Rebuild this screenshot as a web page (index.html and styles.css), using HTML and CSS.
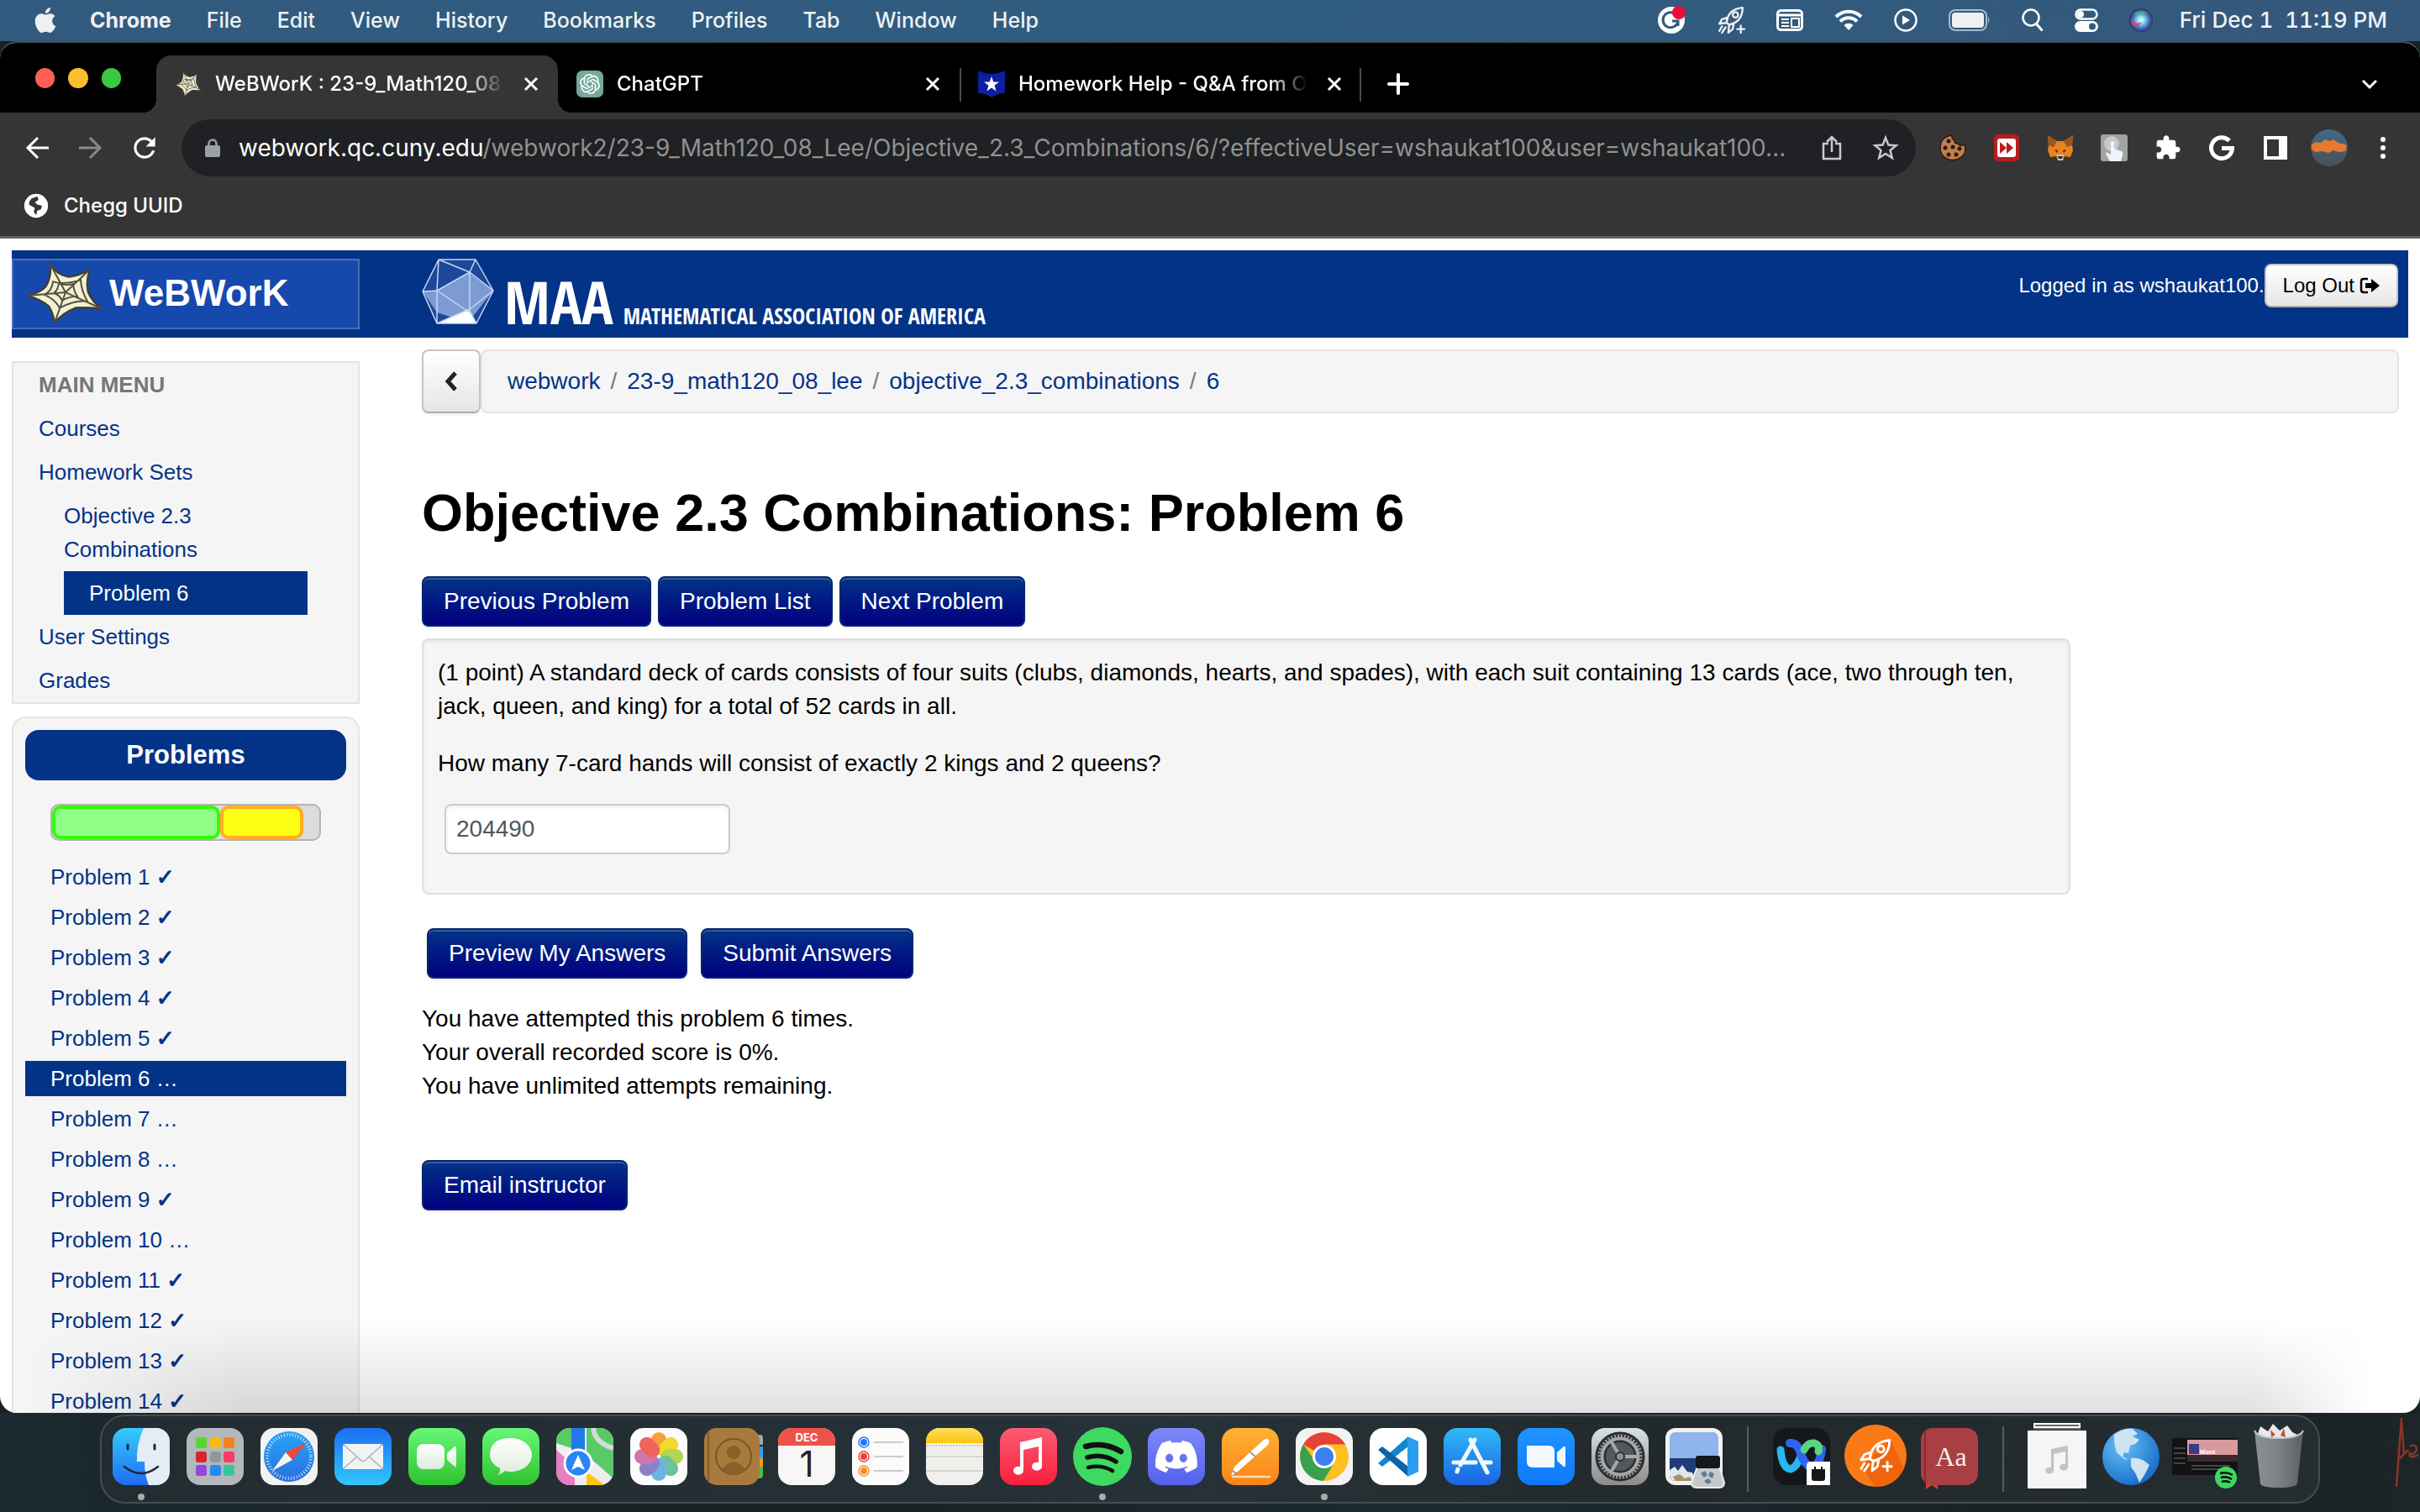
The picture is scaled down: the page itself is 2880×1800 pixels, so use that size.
FILE: index.html
```html
<!DOCTYPE html>
<html lang="en">
<head>
<meta charset="utf-8">
<title>WeBWorK : 23-9_Math120_08_Lee : Objective_2.3_Combinations : 6</title>
<link rel="stylesheet" href="styles.css">
</head>
<body>
<svg class="defs" aria-hidden="true">
  <defs>
    <linearGradient id="g-green" x1="0" y1="0" x2="0" y2="1"><stop offset="0" stop-color="#67f777"/><stop offset="1" stop-color="#2ec22f"/></linearGradient>
    <linearGradient id="g-white" x1="0" y1="0" x2="0" y2="1"><stop offset="0" stop-color="#fff"/><stop offset="1" stop-color="#dcebdc"/></linearGradient>
    <linearGradient id="g-mail" x1="0" y1="0" x2="0" y2="1"><stop offset="0" stop-color="#1d6ef2"/><stop offset="1" stop-color="#31c6fb"/></linearGradient>
    <linearGradient id="g-finder" x1="0" y1="0" x2="0" y2="1"><stop offset="0" stop-color="#36ccfb"/><stop offset="1" stop-color="#1f6cf2"/></linearGradient>
    <linearGradient id="g-music" x1="0" y1="0" x2="0" y2="1"><stop offset="0" stop-color="#fb5c74"/><stop offset="1" stop-color="#fa1f3c"/></linearGradient>
    <linearGradient id="g-note" x1="0" y1="0" x2="0" y2="1"><stop offset="0" stop-color="#fede5a"/><stop offset="1" stop-color="#fdc50f"/></linearGradient>
    <linearGradient id="g-discord" x1="0" y1="0" x2="0" y2="1"><stop offset="0" stop-color="#7d87f8"/><stop offset="1" stop-color="#5560ef"/></linearGradient>
    <linearGradient id="g-orange" x1="0" y1="0" x2="0" y2="1"><stop offset="0" stop-color="#feb233"/><stop offset="1" stop-color="#fa8419"/></linearGradient>
    <linearGradient id="g-store" x1="0" y1="0" x2="0" y2="1"><stop offset="0" stop-color="#2fbaf8"/><stop offset="1" stop-color="#1a62e2"/></linearGradient>
    <linearGradient id="g-zoom" x1="0" y1="0" x2="0" y2="1"><stop offset="0" stop-color="#1f94ff"/><stop offset="1" stop-color="#0f78fb"/></linearGradient>
    <linearGradient id="g-gear" x1="0" y1="0" x2="0" y2="1"><stop offset="0" stop-color="#d6e3ea"/><stop offset="1" stop-color="#8e8a86"/></linearGradient>
    <linearGradient id="g-safari" x1="0" y1="0" x2="0" y2="1"><stop offset="0" stop-color="#27a5f5"/><stop offset="1" stop-color="#2a6fe0"/></linearGradient>
    <linearGradient id="g-trash" x1="0" y1="0" x2="1" y2="0"><stop offset="0" stop-color="#8d9194"/><stop offset=".5" stop-color="#7d8184"/><stop offset="1" stop-color="#5c6063"/></linearGradient>
    <linearGradient id="g-avatar" x1="0" y1="0" x2="0" y2="1"><stop offset="0" stop-color="#3f6c84"/><stop offset="1" stop-color="#4b4f5c"/></linearGradient>
    <radialGradient id="g-earth" cx=".35" cy=".3" r=".8"><stop offset="0" stop-color="#66c1f8"/><stop offset="1" stop-color="#1266c4"/></radialGradient>
    <radialGradient id="g-siri"><stop offset="0" stop-color="#fff"/><stop offset=".35" stop-color="#7dd3e8"/><stop offset=".7" stop-color="#3c6fc4"/><stop offset="1" stop-color="#3a2c5e"/></radialGradient>
    <clipPath id="tile"><rect width="68" height="68" rx="16"/></clipPath>
    <symbol id="rocket" viewBox="0 0 32 32"><g fill="none" stroke="currentColor" stroke-width="2.2" stroke-linejoin="round" stroke-linecap="round"><path d="M11 19C12 9 18 3 29 2c0 11-6 17-15 19z"/><circle cx="21" cy="10" r="3"/><path d="M12 13l-6 2-3 5 8-1zM19 20l-1 6-5 4 1-9zM6 23l-3 5M10 24l-4 6"/><path d="M27 22v8M23 26h8"/></g></symbol>
    <symbol id="close" viewBox="0 0 24 24"><path d="M5 5l14 14M19 5L5 19" stroke="currentColor" stroke-width="3" fill="none"/></symbol>
    <symbol id="star" viewBox="0 0 90 76" preserveAspectRatio="none"><path d="M28 3q8 13 22 15 12-1 25-9-5 14-2 28 5 12 16 20-20-2-31-1-15 6-25 18-2-12-7-20-9-8-25-13 16-4 22-12 6-11 5-26z" fill="#f2f1d2" stroke="#3f3d33" stroke-width="2.500" stroke-linejoin="round"/><path d="M46 37L28 3M46 37L75 9M46 37l43 20M46 37L33 74M46 37L1 41M31 24q14 4 33-2 1 14 8 26-15-2-33 8-5-10-18-16 9-5 10-16zM38 26q8 3 17 1 1 9 5 15-10 0-18 5-3-7-10-9 5-4 6-12z" fill="none" stroke="#55513f" stroke-width="2"/></symbol>
  </defs>
</svg>

<header class="menubar">
  <nav class="menus" aria-label="Menu bar">
    <svg class="apple" viewBox="0 0 24 24"><path fill="currentColor" d="M12.152 6.896c-.948 0-2.415-1.078-3.96-1.04-2.04.027-3.91 1.183-4.961 3.014-2.117 3.675-.546 9.103 1.519 12.09 1.013 1.454 2.208 3.09 3.792 3.039 1.52-.065 2.09-.987 3.935-.987 1.831 0 2.35.987 3.96.948 1.637-.026 2.676-1.48 3.676-2.948 1.156-1.688 1.636-3.325 1.662-3.415-.039-.013-3.182-1.221-3.22-4.857-.026-3.04 2.48-4.494 2.597-4.559-1.429-2.09-3.623-2.324-4.39-2.376-2-.156-3.675 1.09-4.61 1.09zM15.53 3.83c.843-1.012 1.4-2.427 1.245-3.83-1.207.052-2.662.805-3.532 1.818-.78.896-1.454 2.338-1.273 3.714 1.338.104 2.715-.688 3.559-1.701"/></svg>
    <span class="app-name">Chrome</span><span>File</span><span>Edit</span><span>View</span><span>History</span><span>Bookmarks</span><span>Profiles</span><span>Tab</span><span>Window</span><span>Help</span>
  </nav>
  <div class="status">
    <svg width="34" height="34" viewBox="0 0 34 34"><circle cx="17" cy="17" r="16" fill="#fff"/><path d="M23 11a9 9 0 1 0 2 7h-7M25 18v6" fill="none" stroke="#325a7c" stroke-width="3"/><circle cx="26" cy="8" r="8" fill="#e8103a"/></svg>
    <svg width="34" height="34"><use href="#rocket"/></svg>
    <svg width="32" height="26" viewBox="0 0 32 26"><rect x="1.500" y="1.500" width="29" height="23" rx="4" fill="none" stroke="#fff" stroke-width="3"/><path d="M2 7h28" stroke="#fff" stroke-width="3"/><path d="M6 12h9M6 16h9M6 20h9" stroke="#fff" stroke-width="2"/><rect x="18" y="11" width="9" height="10" fill="none" stroke="#fff" stroke-width="2"/></svg>
    <svg width="34" height="26" viewBox="0 0 34 26"><path d="M2 9a21 21 0 0 1 30 0M7 14.500a14 14 0 0 1 20 0" fill="none" stroke="#fff" stroke-width="4"/><path d="M17 25l-5.500-6a8 8 0 0 1 11 0z" fill="#fff"/></svg>
    <svg width="28" height="28" viewBox="0 0 28 28"><circle cx="14" cy="14" r="12.500" fill="none" stroke="#fff" stroke-width="2.500"/><path d="M10 8.500v11l9-5.500z" fill="#fff"/></svg>
    <svg width="50" height="26" viewBox="0 0 50 26"><rect x="1" y="1" width="44" height="24" rx="7" fill="none" stroke="#a6b9c9" stroke-width="2"/><rect x="4" y="4" width="38" height="18" rx="4" fill="#eef1f4"/><path d="M47 9q3 4 0 8z" fill="#a6b9c9"/></svg>
    <svg width="26" height="28" viewBox="0 0 26 28"><circle cx="11" cy="11" r="9.500" fill="none" stroke="#fff" stroke-width="2.500"/><path d="M17.500 18.500l7 8" stroke="#fff" stroke-width="3"/></svg>
    <svg width="28" height="28" viewBox="0 0 28 28"><rect x="1.500" y="1.500" width="25" height="11" rx="5.500" fill="none" stroke="#fff" stroke-width="2.500"/><circle cx="7" cy="7" r="4" fill="#fff"/><rect y="15" width="28" height="13" rx="6.500" fill="#fff"/><circle cx="21" cy="21.500" r="4" fill="#325a7c"/></svg>
    <svg width="28" height="28" viewBox="0 0 28 28"><circle cx="14" cy="14" r="14" fill="url(#g-siri)"/><path d="M5 7q8-7 17-1-9 1-17 1z" fill="#3fb57a"/><path d="M2 12q5 9 13 4-6 9-12 3z" fill="#d8417f"/></svg>
    <time>Fri Dec 1&nbsp; 11:19 PM</time>
  </div>
</header>

<main class="window">
  <div class="tabstrip">
    <div class="lights"><i class="light red"></i><i class="light amber"></i><i class="light lime"></i></div>
    <div class="tab active">
      <svg class="favicon"><use href="#star"/></svg>
      <span class="tab-title">WeBWorK : 23-9_Math120_08_Lee</span>
      <button class="tab-close" aria-label="Close tab"><svg><use href="#close"/></svg></button>
    </div>
    <div class="tab">
      <svg class="favicon" viewBox="0 0 32 32"><rect width="32" height="32" rx="7" fill="#74a99b"/><path transform="translate(4 4)" fill="#fff" d="M22.2819 9.8211a5.9847 5.9847 0 0 0-.5157-4.9108 6.0462 6.0462 0 0 0-6.5098-2.9A6.0651 6.0651 0 0 0 4.9807 4.1818a5.9847 5.9847 0 0 0-3.9977 2.9 6.0462 6.0462 0 0 0 .7427 7.0966 5.98 5.98 0 0 0 .511 4.9107 6.051 6.051 0 0 0 6.5146 2.9001A5.9847 5.9847 0 0 0 13.2599 24a6.0557 6.0557 0 0 0 5.7718-4.2058 5.9894 5.9894 0 0 0 3.9977-2.9001 6.0557 6.0557 0 0 0-.7475-7.0729zm-9.022 12.6081a4.4755 4.4755 0 0 1-2.8764-1.0408l.1419-.0804 4.7783-2.7582a.7948.7948 0 0 0 .3927-.6813v-6.7369l2.02 1.1686a.071.071 0 0 1 .038.052v5.5826a4.504 4.504 0 0 1-4.4945 4.4944zm-9.6607-4.1254a4.4708 4.4708 0 0 1-.5346-3.0137l.142.0852 4.783 2.7582a.7712.7712 0 0 0 .7806 0l5.8428-3.3685v2.3324a.0804.0804 0 0 1-.0332.0615L9.74 19.9502a4.4992 4.4992 0 0 1-6.1408-1.6464zM2.3408 7.8956a4.485 4.485 0 0 1 2.3655-1.9728V11.6a.7664.7664 0 0 0 .3879.6765l5.8144 3.3543-2.0201 1.1685a.0757.0757 0 0 1-.071 0l-4.8303-2.7865A4.504 4.504 0 0 1 2.3408 7.872zm16.5963 3.8558L13.1038 8.364 15.1192 7.2a.0757.0757 0 0 1 .071 0l4.8303 2.7913a4.4944 4.4944 0 0 1-.6765 8.1042v-5.6772a.79.79 0 0 0-.407-.667zm2.0107-3.0231l-.142-.0852-4.7735-2.7818a.7759.7759 0 0 0-.7854 0L9.409 9.2297V6.8974a.0662.0662 0 0 1 .0284-.0615l4.8303-2.7866a4.4992 4.4992 0 0 1 6.6802 4.66zM8.3065 12.863l-2.02-1.1638a.0804.0804 0 0 1-.038-.0567V6.0742a4.4992 4.4992 0 0 1 7.3757-3.4537l-.142.0805L8.704 5.459a.7948.7948 0 0 0-.3927.6813zm1.0976-2.3654l2.602-1.4998 2.6069 1.4998v2.9994l-2.5974 1.4997-2.6067-1.4997Z"/></svg>
      <span class="tab-title">ChatGPT</span>
      <button class="tab-close" aria-label="Close tab"><svg><use href="#close"/></svg></button>
    </div>
    <div class="tab divided">
      <svg class="favicon" viewBox="0 0 32 32"><path d="M0 0q8 4 16 4t16-4v27q-8 0-16 5-8-5-16-5z" fill="#0b1fa0"/><path d="M16 7l2.300 6.500H25l-5.400 4.200 2 6.800L16 20.500l-5.600 4 2-6.800L7 13.500h6.700z" fill="#fff"/></svg>
      <span class="tab-title">Homework Help - Q&amp;A from Online Tutors</span>
      <button class="tab-close" aria-label="Close tab"><svg><use href="#close"/></svg></button>
    </div>
    <button class="new-tab" aria-label="New tab"><svg width="24" height="24" viewBox="0 0 24 24"><path d="M12 1v22M1 12h22" stroke="#fff" stroke-width="4" stroke-linecap="round"/></svg></button>
    <button class="tab-search" aria-label="Search tabs"><svg width="20" height="12" viewBox="0 0 20 12"><path d="M2 2l8 8 8-8" fill="none" stroke="#fff" stroke-width="3"/></svg></button>
  </div>

  <div class="toolbar">
    <button class="tool" aria-label="Back"><svg width="28" height="26" viewBox="0 0 28 26"><path d="M28 13H3M15 1L3 13l12 12" fill="none" stroke="#fff" stroke-width="3"/></svg></button>
    <button class="tool" aria-label="Forward"><svg width="28" height="26" viewBox="0 0 28 26"><path d="M0 13h25M13 1l12 12-12 12" fill="none" stroke="#8a8a8a" stroke-width="3"/></svg></button>
    <button class="tool" aria-label="Reload"><svg width="38" height="38" viewBox="0 0 24 24"><path fill="#fff" d="M17.650 6.350C16.200 4.900 14.210 4 12 4c-4.420 0-7.990 3.580-7.990 8s3.570 8 7.990 8c3.730 0 6.840-2.550 7.730-6h-2.080c-.82 2.330-3.040 4-5.650 4-3.310 0-6-2.690-6-6s2.690-6 6-6c1.660 0 3.140.69 4.220 1.780L13 11h7V4l-2.350 2.350z"/></svg></button>
    <div class="omnibox">
      <svg width="18" height="22" viewBox="0 0 18 22"><rect y="8" width="18" height="14" rx="2" fill="#9aa0a6"/><path d="M4.500 9V6a4.500 4.500 0 0 1 9 0v3" fill="none" stroke="#9aa0a6" stroke-width="2.500"/></svg>
      <div class="url"><b>webwork.qc.cuny.edu</b>/webwork2/23-9_Math120_08_Lee/Objective_2.3_Combinations/6/?effectiveUser=wshaukat100&amp;user=wshaukat100...</div>
      <button class="tool" aria-label="Share"><svg width="24" height="30" viewBox="0 0 24 30"><path d="M8 10H2v18h20V10h-6M12 20V3M6 8l6-6 6 6" fill="none" stroke="#c8cacc" stroke-width="2.500"/></svg></button>
      <button class="tool" aria-label="Bookmark this page"><svg width="30" height="30" viewBox="0 0 30 30"><path d="M15 3l3.400 8.600 9.100.6-7 5.800 2.300 9-7.800-5-7.800 5 2.300-9-7-5.800 9.100-.6z" fill="none" stroke="#c8cacc" stroke-width="2.500"/></svg></button>
    </div>
    <div class="extensions">
      <button class="tool" aria-label="Cookies"><svg width="32" height="32" viewBox="0 0 32 32"><path d="M15 1q-1 5 3 6-1 4 4 4 2 4 8 1 3 10-4 15-8 6-17 2-8-4-8-13Q1 3 15 1z" fill="#c07f4f" stroke="#2a1a10" stroke-width="1.500"/><g fill="#2a1a10"><circle cx="11" cy="8" r="2.500"/><circle cx="7" cy="16" r="2.500"/><circle cx="16" cy="15" r="2.500"/><circle cx="24" cy="17" r="2.500"/><circle cx="11" cy="24" r="2.500"/><circle cx="20" cy="24" r="2.500"/></g></svg></button>
      <button class="tool" aria-label="Video speed"><svg width="30" height="32" viewBox="0 0 30 32"><rect width="30" height="32" rx="5" fill="#b71c1f"/><rect x="4" y="5" width="22" height="22" rx="3" fill="#fff"/><path d="M7 9l8 7-8 7zM15 9l8 7-8 7z" fill="#b71c1f"/></svg></button>
      <button class="tool" aria-label="Wallet"><svg width="32" height="30" viewBox="0 0 32 30"><path d="M1 0l11 7h8l11-7-1 12 1 6-3 8-7-1-2 5h-6l-2-5-7 1-3-8 1-6z" fill="#e8821e"/><path d="M1 0l11 7-4 7-6-2zM31 0L20 7l4 7 6-2z" fill="#9a561f"/><path d="M9 17l4 1-1 3zM23 17l-4 1 1 3z" fill="#2b2f38"/><path d="M12 23h8l-1 7h-6z" fill="#cfc3b6"/><path d="M13 25h6l-1 3h-4z" fill="#2b2f38"/></svg></button>
      <button class="tool" aria-label="Auto clicker"><svg width="32" height="32" viewBox="0 0 32 32"><rect width="32" height="32" rx="3" fill="#a2a2a2"/><circle cx="13" cy="11" r="9" fill="#c9c9c9"/><path d="M12 9q2-2 4 0v8l9 3q2 1 1 5l-2 7H11l-5-9q0-3 6 1z" fill="#eef3fb"/></svg></button>
      <button class="tool" aria-label="Extensions"><svg width="32" height="32" viewBox="0 0 24 24"><path fill="#fff" d="M20.500 11H19V7c0-1.100-.9-2-2-2h-4V3.500C13 2.120 11.880 1 10.500 1S8 2.120 8 3.500V5H4c-1.100 0-1.990.9-1.990 2v3.800H3.500c1.490 0 2.700 1.210 2.700 2.700s-1.210 2.700-2.700 2.700H2V20c0 1.100.9 2 2 2h3.800v-1.500c0-1.490 1.210-2.700 2.700-2.700 1.490 0 2.700 1.210 2.700 2.700V22H17c1.100 0 2-.9 2-2v-4h1.500c1.380 0 2.500-1.120 2.500-2.500S21.880 11 20.500 11z"/></svg></button>
      <button class="tool" aria-label="Google"><svg width="30" height="30" viewBox="0 0 30 30"><path d="M24 6.500a12.500 12.500 0 1 0 3.500 9H15" fill="none" stroke="#fff" stroke-width="5"/></svg></button>
      <button class="tool" aria-label="Side panel"><svg width="28" height="28" viewBox="0 0 28 28"><path d="M0 0h28v28H0zM4 4v20h14V4z" fill="#fff" fill-rule="evenodd"/></svg></button>
      <button class="tool" aria-label="Profile"><svg width="44" height="44" viewBox="0 0 44 44"><circle cx="22" cy="22" r="22" fill="url(#g-avatar)"/><path d="M1 18l6-3 5 1 5-4 5 2 5-2 6 4 9 2q1 6-1 8l-8 1-6-2-6 3-7-2-8 1-4-2q-2-3-1-7z" fill="#e9782f"/></svg></button>
      <button class="tool" aria-label="Chrome menu"><svg width="6" height="26" viewBox="0 0 6 26"><g fill="#fff"><circle cx="3" cy="3" r="3"/><circle cx="3" cy="13" r="3"/><circle cx="3" cy="23" r="3"/></g></svg></button>
    </div>
  </div>

  <div class="bookmarks">
    <a href="#chegg"><svg width="34" height="34" viewBox="0 0 24 24"><circle cx="12" cy="12" r="10" fill="#fff"/><path d="M8 6l5-2 1 3-3 2 2 2 4 1-1 3-3 1-1 4-2-3 1-3-5-3q0-3 2-5z" fill="#353535"/></svg>Chegg UUID</a>
  </div>

  <div class="page">
    <header class="masthead">
      <a class="brand" href="#home"><svg width="90" height="74"><use href="#star"/></svg>WeBWorK</a>
      <a class="maa" href="#maa">
        <svg width="86" height="78" viewBox="0 0 86 78"><path d="M20 1h44l21 37-20 39H18L1 39z" fill="#1d489a"/><path d="M57 16l28 22-30 38-37-12L18 38 57 16zM1 39h17v25z" fill="#7c9bd3"/><path d="M55 60l10 17H18z" fill="#fff"/><path d="M20 1h44l21 37-20 39H18L1 39zM20 1l37 15L18 38zM64 1l-7 15 28 22M57 16v48L18 38 1 39M20 1l-2 37v39l39-17 28-22M57 62l8 15" fill="none" stroke="#c9d6ef" stroke-width="1.500" stroke-linejoin="round"/></svg>
        <strong>MAA</strong><span>MATHEMATICAL ASSOCIATION OF AMERICA</span>
      </a>
      <div class="login">Logged in as wshaukat100.<button class="btn small">Log Out <svg width="24" height="20" viewBox="0 0 24 20"><path d="M10 2H5Q2 2 2 5v10q0 3 3 3h5" fill="none" stroke="#000" stroke-width="2.500"/><path d="M7 7h7V2l10 8-10 8v-5H7z"/></svg></button></div>
    </header>

    <div class="columns">
      <aside>
        <nav class="panel main-menu" aria-label="Main menu">
          <h2>MAIN MENU</h2>
          <a href="#courses">Courses</a>
          <a href="#sets">Homework Sets</a>
          <div class="sub">
            <a href="#set">Objective 2.3 Combinations</a>
            <a class="current" href="#p6">Problem 6</a>
          </div>
          <a href="#settings">User Settings</a>
          <a href="#grades">Grades</a>
        </nav>
        <nav class="panel problems" aria-label="Problems">
          <h2>Problems</h2>
          <div class="progress"><i class="done" style="width:63%"></i><i class="tried" style="width:31%"></i></div>
          <a href="#p1">Problem 1 <i>✓</i></a>
          <a href="#p2">Problem 2 <i>✓</i></a>
          <a href="#p3">Problem 3 <i>✓</i></a>
          <a href="#p4">Problem 4 <i>✓</i></a>
          <a href="#p5">Problem 5 <i>✓</i></a>
          <a class="current" href="#p6">Problem 6 …</a>
          <a href="#p7">Problem 7 …</a>
          <a href="#p8">Problem 8 …</a>
          <a href="#p9">Problem 9 <i>✓</i></a>
          <a href="#p10">Problem 10 …</a>
          <a href="#p11">Problem 11 <i>✓</i></a>
          <a href="#p12">Problem 12 <i>✓</i></a>
          <a href="#p13">Problem 13 <i>✓</i></a>
          <a href="#p14">Problem 14 <i>✓</i></a>
        </nav>
      </aside>

      <section class="content">
        <div class="trail">
          <button class="btn up" aria-label="Up one level"><svg width="18" height="24" viewBox="0 0 18 24"><path d="M14 2L5 12l9 10" fill="none" stroke="#222" stroke-width="5"/></svg></button>
          <nav class="crumbs" aria-label="Breadcrumb"><a href="#webwork">webwork</a><span>/</span><a href="#course">23-9_math120_08_lee</a><span>/</span><a href="#set">objective_2.3_combinations</a><span>/</span><a href="#p6">6</a></nav>
        </div>
        <h1>Objective 2.3 Combinations: Problem 6</h1>
        <nav class="row" aria-label="Problem navigation">
          <a class="btn primary" href="#p5">Previous Problem</a>
          <a class="btn primary" href="#list">Problem List</a>
          <a class="btn primary" href="#p7">Next Problem</a>
        </nav>
        <form>
          <div class="problem">
            <p>(1 point) A standard deck of cards consists of four suits (clubs, diamonds, hearts, and spades), with each suit containing 13 cards (ace, two through ten, jack, queen, and king) for a total of 52 cards in all.</p>
            <p><label for="answer">How many 7-card hands will consist of exactly 2 kings and 2 queens?</label></p>
            <input id="answer" type="text" value="204490">
          </div>
          <div class="row submit">
            <button class="btn primary" type="button">Preview My Answers</button>
            <button class="btn primary" type="button">Submit Answers</button>
          </div>
        </form>
        <p class="attempts">You have attempted this problem 6 times.<br>Your overall recorded score is 0%.<br>You have unlimited attempts remaining.</p>
        <button class="btn primary" type="button">Email instructor</button>
      </section>
    </div>
  </div>
  <div class="dock-shade"></div>
</main>

<footer class="desktop">
  <div class="dock">
    <button class="app running" aria-label="Finder"><svg viewBox="0 0 68 68"><g clip-path="url(#tile)"><rect width="68" height="68" fill="url(#g-finder)"/><path d="M37 0Q28 20 29 40h9q0 16 5 28h25V0z" fill="#e6ecf6"/></g><path d="M18 20v5M50 20v5" stroke="#1c2a3c" stroke-width="3" stroke-linecap="round"/><path d="M14 46q20 16 40 0" fill="none" stroke="#1c2a3c" stroke-width="2.500" stroke-linecap="round"/></svg></button>
    <button class="app" aria-label="Launchpad"><svg viewBox="0 0 68 68"><rect width="68" height="68" rx="16" fill="#b3b8bb"/><rect x="11" y="11" width="13" height="13" rx="3" fill="#57d534"/><rect x="28" y="11" width="13" height="13" rx="3" fill="#fdb913"/><rect x="44" y="11" width="13" height="13" rx="3" fill="#f5821f"/><rect x="11" y="28" width="13" height="13" rx="3" fill="#d8252b"/><rect x="28" y="28" width="13" height="13" rx="3" fill="#8e989d"/><rect x="44" y="28" width="13" height="13" rx="3" fill="#f93c62"/><rect x="11" y="44" width="13" height="13" rx="3" fill="#9446dc"/><rect x="28" y="44" width="13" height="13" rx="3" fill="#238bf5"/><rect x="44" y="44" width="13" height="13" rx="3" fill="#37c797"/></svg></button>
    <button class="app" aria-label="Safari"><svg viewBox="0 0 68 68"><rect width="68" height="68" rx="16" fill="#f2f2f2"/><circle cx="34" cy="34" r="30" fill="url(#g-safari)"/><circle cx="34" cy="34" r="26" fill="none" stroke="#cfe5fb" stroke-width="4" stroke-dasharray="1 2.400"/><path d="M55 17L30 29l8 9z" fill="#f1473c"/><path d="M14 51l16-22 8 9z" fill="#f4f4f4"/></svg></button>
    <button class="app" aria-label="Mail"><svg viewBox="0 0 68 68"><rect width="68" height="68" rx="16" fill="url(#g-mail)"/><rect x="10" y="19" width="48" height="30" rx="3" fill="#f1f3f5"/><path d="M11 20l20 18q3 3 6 0l20-18M11 48l16-14M57 48L41 34" fill="none" stroke="#a9b1ba" stroke-width="1.500"/></svg></button>
    <button class="app" aria-label="FaceTime"><svg viewBox="0 0 68 68"><rect width="68" height="68" rx="16" fill="url(#g-green)"/><rect x="10" y="19" width="33" height="30" rx="8" fill="url(#g-white)"/><path d="M46 30l9-8q2-1 2 2v20q0 3-2 2l-9-8z" fill="url(#g-white)"/></svg></button>
    <button class="app" aria-label="Messages"><svg viewBox="0 0 68 68"><rect width="68" height="68" rx="16" fill="url(#g-green)"/><path d="M34 12c14 0 25 9 25 20S48 52 34 52q-4 0-7-1-4 4-9 5 4-4 3-8-12-6-12-16 0-20 25-20z" fill="url(#g-white)"/></svg></button>
    <button class="app" aria-label="Maps"><svg viewBox="0 0 68 68"><g clip-path="url(#tile)"><rect width="68" height="68" fill="#ededf2"/><path d="M0 0h18v24L0 18zM36 0h32v60L36 32z" fill="#58ca67"/><path d="M0 26l22 20v22H0z" fill="#e57ec5"/><path d="M36 52l22 16H36z" fill="#fcc613"/><path d="M44 0q2 18 24 24" fill="none" stroke="#d5d8dc" stroke-width="6"/><path d="M18 0h16v36H18z" fill="#2478ee"/></g><circle cx="26" cy="42" r="16" fill="#2985f7" stroke="#fff" stroke-width="3"/><path d="M26 32l8 18-8-4-8 4z" fill="#fff"/></svg></button>
    <button class="app" aria-label="Photos"><svg viewBox="0 0 68 68"><rect width="68" height="68" rx="16" fill="#fcfcfc"/><g transform="translate(34 34)" opacity=".88"><rect x="-9" y="-29" width="18" height="27" rx="9" fill="#f7941d"/><rect x="-9" y="-29" width="18" height="27" rx="9" fill="#f0d60f" transform="rotate(45)"/><rect x="-9" y="-29" width="18" height="27" rx="9" fill="#a9cf3c" transform="rotate(90)"/><rect x="-9" y="-29" width="18" height="27" rx="9" fill="#5cbb8c" transform="rotate(135)"/><rect x="-9" y="-29" width="18" height="27" rx="9" fill="#5aa9e0" transform="rotate(180)"/><rect x="-9" y="-29" width="18" height="27" rx="9" fill="#7b71c4" transform="rotate(225)"/><rect x="-9" y="-29" width="18" height="27" rx="9" fill="#c964a4" transform="rotate(270)"/><rect x="-9" y="-29" width="18" height="27" rx="9" fill="#f04e45" transform="rotate(315)"/></g></svg></button>
    <button class="app" aria-label="Contacts"><svg viewBox="0 0 68 68"><path d="M62 8h5q3 0 3 4v8h-8z" fill="#9aa"/><path d="M62 22h8v14h-8z" fill="#3c9be8"/><path d="M62 36h8v10h-8z" fill="#f29a1d"/><path d="M62 46h8v10q0 4-5 4h-3z" fill="#48c23f"/><rect width="66" height="68" rx="15" fill="#a87a3d"/><path d="M5 3v62" stroke="#7b5524" stroke-width="1.500"/><circle cx="35" cy="34" r="21" fill="none" stroke="#7b5524" stroke-width="2"/><g fill="#87602c"><circle cx="35" cy="29" r="8"/><path d="M21 49q14-17 28 0-14 12-28 0z"/></g></svg></button>
    <button class="app" aria-label="Calendar"><svg viewBox="0 0 68 68"><g clip-path="url(#tile)"><rect width="68" height="68" fill="#f8f7f5"/><rect width="68" height="21" fill="#ee5249"/></g><text x="34" y="16" class="cal-month">DEC</text><text x="34" y="58" class="cal-day">1</text></svg></button>
    <button class="app" aria-label="Reminders"><svg viewBox="0 0 68 68"><rect width="68" height="68" rx="16" fill="#fbfbfb"/><path d="M26 17h35M26 34h35M26 51h35" stroke="#bdbdbd" stroke-width="1.500"/><g fill="none" stroke-width="1.500"><circle cx="14" cy="17" r="6" stroke="#1c7bf6"/><circle cx="14" cy="34" r="6" stroke="#f03d38"/><circle cx="14" cy="51" r="6" stroke="#f0911a"/></g><circle cx="14" cy="17" r="4" fill="#1c7bf6"/><circle cx="14" cy="34" r="4" fill="#f03d38"/><circle cx="14" cy="51" r="4" fill="#f0911a"/></svg></button>
    <button class="app" aria-label="Notes"><svg viewBox="0 0 68 68"><g clip-path="url(#tile)"><rect width="68" height="68" fill="#f1efec"/><rect width="68" height="18" fill="url(#g-note)"/><path d="M0 34h68M0 51h68" stroke="#cfccc8" stroke-width="1.500"/><path d="M1 21h67" stroke="#aaa" stroke-width="1.500" stroke-dasharray="1.500 2"/></g></svg></button>
    <button class="app" aria-label="Music"><svg viewBox="0 0 68 68"><rect width="68" height="68" rx="16" fill="url(#g-music)"/><path d="M24 17l26-6v35a6 5 0 1 1-4-5V22l-18 4v25a6 5 0 1 1-4-5z" fill="#fff"/></svg></button>
    <button class="app running" aria-label="Spotify"><svg viewBox="0 0 68 68"><circle cx="34" cy="34" r="35" fill="#3dd960"/><g fill="none" stroke="#111" stroke-linecap="round"><path d="M14 22q22-6 42 6" stroke-width="6.500"/><path d="M16 35q18-5 34 5" stroke-width="5.500"/><path d="M17 47q16-4 29 4" stroke-width="4.500"/></g></svg></button>
    <button class="app" aria-label="Discord"><svg viewBox="0 0 68 68"><rect width="68" height="68" rx="16" fill="url(#g-discord)"/><path transform="translate(9 9) scale(2.080)" fill="#fff" d="M20.317 4.3698a19.7913 19.7913 0 00-4.8851-1.5152.0741.0741 0 00-.0785.0371c-.211.3753-.4447.8648-.6083 1.2495-1.8447-.2762-3.68-.2762-5.4868 0-.1636-.3933-.4058-.8742-.6177-1.2495a.077.077 0 00-.0785-.037 19.7363 19.7363 0 00-4.8852 1.515.0699.0699 0 00-.0321.0277C.5334 9.0458-.319 13.5799.0992 18.0578a.0824.0824 0 00.0312.0561c2.0528 1.5076 4.0413 2.4228 5.9929 3.0294a.0777.0777 0 00.0842-.0276c.4616-.6304.8731-1.2952 1.226-1.9942a.076.076 0 00-.0416-.1057c-.6528-.2476-1.2743-.5495-1.8722-.8923a.077.077 0 01-.0076-.1277c.1258-.0943.2517-.1923.3718-.2914a.0743.0743 0 01.0776-.0105c3.9278 1.7933 8.18 1.7933 12.0614 0a.0739.0739 0 01.0785.0095c.1202.099.246.1981.3728.2924a.077.077 0 01-.0066.1276 12.2986 12.2986 0 01-1.873.8914.0766.0766 0 00-.0407.1067c.3604.698.7719 1.3628 1.225 1.9932a.076.076 0 00.0842.0286c1.961-.6067 3.9495-1.5219 6.0023-3.0294a.077.077 0 00.0313-.0552c.5004-5.177-.8382-9.6739-3.5485-13.6604a.061.061 0 00-.0312-.0286zM8.02 15.3312c-1.1825 0-2.1569-1.0857-2.1569-2.419 0-1.3332.9555-2.4189 2.157-2.4189 1.2108 0 2.1757 1.0952 2.1568 2.419 0 1.3332-.9555 2.4189-2.1569 2.4189zm7.9748 0c-1.1825 0-2.1569-1.0857-2.1569-2.419 0-1.3332.9554-2.4189 2.1569-2.4189 1.2108 0 2.1757 1.0952 2.1568 2.419 0 1.3332-.946 2.4189-2.1568 2.4189Z"/></svg></button>
    <button class="app" aria-label="Pages"><svg viewBox="0 0 68 68"><rect width="68" height="68" rx="16" fill="url(#g-orange)"/><path d="M11 57l4-11L50 14q4-2 6 0 1 3-1 6L20 51z" fill="#fff"/><path d="M13 51l5 4M34 29l6 5" stroke="#999" stroke-width="2"/><path d="M12 58h46" stroke="#ffd9a8" stroke-width="2.500"/></svg></button>
    <button class="app running" aria-label="Chrome"><svg viewBox="0 0 68 68"><rect width="68" height="68" rx="16" fill="#f3f3f3"/><circle cx="34" cy="34" r="29" fill="#fdc022"/><path d="M34 34L9 19.500A29 29 0 0 1 59 19.500H34z" fill="#e5433a"/><path d="M9 19.500A29 29 0 0 0 33 63l13-22-12 2-14-8z" fill="#38a150"/><circle cx="34" cy="34" r="14" fill="#fff"/><circle cx="34" cy="34" r="11" fill="#3c80f0"/></svg></button>
    <button class="app" aria-label="Visual Studio Code"><svg viewBox="0 0 68 68"><rect width="68" height="68" rx="16" fill="#fff"/><path d="M10 42l5 4 31-24V10z" fill="#1286d2"/><path d="M10 26l5-4 31 24v12z" fill="#0d64a8"/><path d="M45 10l13 6v36l-13 6z" fill="#2b9df0"/></svg></button>
    <button class="app" aria-label="App Store"><svg viewBox="0 0 68 68"><rect width="68" height="68" rx="16" fill="url(#g-store)"/><path d="M37 14L20 44M32 14l20 39M12 41h26M47 41h9M17 49l-1 3" fill="none" stroke="#f0f8ff" stroke-width="5" stroke-linecap="round"/></svg></button>
    <button class="app" aria-label="Zoom"><svg viewBox="0 0 68 68"><rect width="68" height="68" rx="16" fill="url(#g-zoom)"/><path d="M11 21h26q7 0 7 7v19H18q-7 0-7-7z" fill="#f3f8ff"/><path d="M47 29l8-7q2-1 2 2v20q0 3-2 2l-8-7z" fill="#f3f8ff"/></svg></button>
    <button class="app" aria-label="System Settings"><svg viewBox="0 0 68 68"><rect width="68" height="68" rx="16" fill="url(#g-gear)"/><circle cx="34" cy="34" r="28" fill="#9a9c9e" stroke="#2c2e30" stroke-width="3"/><circle cx="34" cy="34" r="25" fill="none" stroke="#2c2e30" stroke-width="3" stroke-dasharray="2 2"/><circle cx="34" cy="34" r="19" fill="#55585a" stroke="#2c2e30" stroke-width="4"/><circle cx="34" cy="34" r="21" fill="none" stroke="#a6a8aa" stroke-width="3"/><path d="M34 34h20M34 34L24 17M34 34L24 51" stroke="#a6a8aa" stroke-width="4"/><circle cx="34" cy="34" r="5" fill="#8e9092" stroke="#2c2e30" stroke-width="2"/></svg></button>
    <button class="app" aria-label="Preview"><svg viewBox="0 0 68 68"><rect width="68" height="68" rx="12" fill="#f3f2f0"/><rect x="5" y="5" width="58" height="58" rx="7" fill="#8fb5ea"/><path d="M5 36h58v20q0 7-7 7H12q-7 0-7-7z" fill="#1f3c77"/><path d="M5 50l6-4 4 5 5-7 6 8 6 1 4 10H12q-7 0-7-7z" fill="#dde6e8"/><path d="M9 58l8-3 6 5 6-2 3 5H12z" fill="#a98f62"/><path d="M38 46h26l6 19q0 6-6 6H37q-6 0-6-6z" fill="#c4c9cb" stroke="#e9ecec" stroke-width="2"/><path d="M42 54l5-3 3 5-4 3zM53 52l5 2-2 6-5-3zM46 63l5-3 4 4-5 3z" fill="#5f7c94"/><rect x="36" y="33" width="29" height="15" rx="3" fill="#15171a"/></svg></button>
    <span class="rule"></span>
    <button class="app" aria-label="Webex"><svg viewBox="0 0 68 68"><rect width="68" height="68" rx="16" fill="#15171a"/><path d="M9 26q2 22 12 23 9-3 13-20" fill="none" stroke="#29b7ef" stroke-width="9" stroke-linecap="round"/><path d="M20 18q9-1 13 12t13 18q10-4 12-23" fill="none" stroke="#2f63f4" stroke-width="10" stroke-linecap="round"/><path d="M37 26q4-9 12-8 7 2 5 10" fill="none" stroke="#58d67e" stroke-width="9" stroke-linecap="round"/><path d="M40 45q0-5 5-5h23v28H40z" fill="#fff"/><path d="M47 50h14v10q0 2-2 2H49q-2 0-2-2zM50 46v3M58 46v3" fill="#15171a" stroke="#15171a" stroke-width="2"/></svg></button>
    <button class="app big" aria-label="RocketSim"><svg viewBox="0 0 74 74"><circle cx="37" cy="37" r="37" fill="#fb7a17"/><path d="M20 50l17 24q24 0 34-22L55 18z" fill="#f0650c"/><g transform="translate(16 16) scale(1.300)" color="#fff"><use href="#rocket" width="32" height="32"/></g></svg></button>
    <button class="app" aria-label="Dictionary"><svg viewBox="0 0 68 68"><path d="M6 58h14v15l-7-5-7 5z" fill="#e0382f"/><rect width="68" height="68" rx="14" fill="#a93f42"/><path d="M5 4v60" stroke="#86292e" stroke-width="2"/><text x="36" y="45" class="dict">Aa</text></svg></button>
    <span class="rule"></span>
    <button class="app" aria-label="Downloads"><svg viewBox="0 0 68 68"><path d="M6-6h56v8H6z" fill="#fff"/><path d="M8-3h52M6 1h58" stroke="#333" stroke-width="1.500"/><path d="M-1 3h70v69H-1z" fill="#f5f5f5"/><path d="M27 25l20-4v26a5 4 0 1 1-3-4V28l-14 3v20a5 4 0 1 1-3-4z" fill="#c3c3c3"/></svg></button>
    <button class="app" aria-label="Web"><svg viewBox="0 0 68 68"><circle cx="34" cy="34" r="34" fill="url(#g-earth)"/><path d="M14 8Q26-1 36 1l6 6-6 3 8 4-5 5-6 2-2 9-5-1-2 5 7 4-5-1-9-8q-4-13-3-21zM34 36q12-2 22 8l-6 12-6 9-4-10-6-9z" fill="#cfe4f1"/></svg></button>
    <button class="app" aria-label="Spotify window"><svg viewBox="0 0 68 68"><rect x="-5" y="12" width="78" height="44" fill="#121212"/><rect x="13" y="14" width="60" height="18" fill="#d79a9d"/><rect x="13" y="32" width="60" height="8" fill="#3a2a2c"/><rect x="15" y="19" width="12" height="12" fill="#3b3a86"/><text x="28" y="31" class="mixed">Mixed</text><path d="M-3 24h14M-3 30h14M-3 36h14M-3 42h14M18 45h46M18 49h40" stroke="#555" stroke-width="1.500"/><circle cx="59" cy="59" r="13" fill="#3dd960"/><g fill="none" stroke="#111" stroke-width="2.500"><path d="M52 54q8-2 15 2M53 59q7-2 13 2M54 64q6-2 10 1"/></g></svg></button>
    <button class="app" aria-label="Trash"><svg viewBox="0 0 68 68"><path d="M8 10L12-2l9 6 6-9 8 8 9-6 6 8 8 4-2 8H10z" fill="#e9e9e9"/><path d="M24 2l6 6-5 3zM40 0l-4 9 6 2z" fill="#c5532e"/><path d="M5 3l7 63q1 5 22 5t22-5l7-63q-8 9-29 9T5 3z" fill="url(#g-trash)"/><path d="M5 3q4 9 29 9T63 3" fill="none" stroke="#c3c7ca" stroke-width="2"/></svg></button>
  </div>
  <svg class="scribble" width="32" height="96" viewBox="0 0 32 96"><path d="M10 2L4 84M10 6l3 40M8 50l10-10M20 36q8-4 8 4-4 8-8 4-2 8 10 2" fill="none" stroke="#8c3626" stroke-width="2.500"/></svg>
</footer>
</body>
</html>
```
FILE: styles.css
```css
* { box-sizing: border-box; }

body {
  margin: 0;
  height: 100vh;
  display: flex;
  flex-direction: column;
  overflow: hidden;
  background: #192124;
  font-family: "Liberation Sans", Arial, sans-serif;
  font-size: 28px;
  line-height: 40px;
  color: #000;
}

svg { display: block; flex: none; overflow: visible; }
button { font: inherit; color: inherit; margin: 0; padding: 0; border: 0; background: none; }
a { color: #033387; text-decoration: none; }
i { font-style: normal; }
h1, h2, p { margin: 0; }
.defs { position: absolute; width: 0; height: 0; }

/* System menu bar */
.menubar {
  flex: none;
  display: flex;
  justify-content: space-between;
  height: 49px;
  padding: 0 39px 2px;
  background: linear-gradient(90deg, #325a7e, #305d80 50%, #34587b);
  color: #eef1f4;
  font: 500 25px/46px Inter, sans-serif;
}
.menus, .status { display: flex; align-items: center; }
.menus { gap: 42px; }
.apple { width: 30px; height: 30px; margin-right: -4px; }
.app-name { font-weight: 700; }
.status { gap: 37px; }
.status time { margin-left: -5px; font-size: 26px; font-variant-numeric: tabular-nums; }

/* Browser window */
.window {
  flex: 1;
  min-height: 0;
  display: flex;
  flex-direction: column;
  position: relative;
  overflow: hidden;
  border-radius: 20px;
  border-top: 2px solid #4a4a4c;
  background: #fff;
}
.tabstrip {
  flex: none;
  display: flex;
  height: 83px;
  background: #000;
  color: #fff;
  font: 500 24px/32px Inter, sans-serif;
}
.lights { display: flex; gap: 16px; width: 186px; padding: 30px 42px; }
.light { width: 24px; height: 24px; border-radius: 50%; }
.red { background: #ff5f57; }
.amber { background: #febc2e; }
.lime { background: #3bc943; }
.tab {
  display: flex;
  align-items: center;
  width: 478px;
  margin-top: 15px;
  padding: 0 20px 0 22px;
  position: relative;
}
.tab.active { background: #353535; border-radius: 18px 18px 0 0; }
.tab.active::before, .tab.active::after {
  content: "";
  position: absolute;
  bottom: 0;
  width: 16px;
  height: 16px;
}
.tab.active::before { left: -16px; background: radial-gradient(circle at 0 0, #000 16px, #353535 16px); }
.tab.active::after { right: -16px; background: radial-gradient(circle at 100% 0, #000 16px, #353535 16px); }
.tab.divided::before, .tab.divided::after {
  content: "";
  position: absolute;
  top: 15px;
  width: 2px;
  height: 40px;
  background: #4a4a4a;
}
.tab.divided::before { left: 0; }
.tab.divided::after { right: 0; }
.favicon { width: 32px; height: 32px; margin-right: 16px; }
.tab-title {
  flex: 1;
  overflow: hidden;
  white-space: nowrap;
  -webkit-mask-image: linear-gradient(90deg, #000 87%, transparent);
  mask-image: linear-gradient(90deg, #000 87%, transparent);
}
.tab-close { margin-left: 20px; }
.tab-close svg { width: 24px; height: 24px; }
.new-tab, .tab-search { display: grid; place-items: center; width: 88px; padding-top: 14px; }
.tab-search { margin-left: auto; width: 120px; }

.toolbar {
  flex: none;
  display: flex;
  align-items: center;
  height: 84px;
  padding: 0 12px;
  background: #353535;
}
.tool { display: grid; place-items: center; flex: none; width: 64px; height: 64px; }
.omnibox {
  flex: 1;
  min-width: 0;
  display: flex;
  align-items: center;
  height: 68px;
  margin: 0 12px;
  padding: 0 4px 0 28px;
  border-radius: 34px;
  background: #202124;
}
.url {
  flex: 1;
  min-width: 0;
  margin-left: 22px;
  overflow: hidden;
  white-space: nowrap;
  color: #919191;
  font: 400 28px/40px Inter, sans-serif;
}
.url b { font-weight: 400; color: #fff; }
.extensions { display: flex; }
.bookmarks {
  flex: none;
  height: 66px;
  padding: 10px 26px;
  border-bottom: 3px solid #616161;
  background: #353535;
}
.bookmarks a {
  display: flex;
  align-items: center;
  gap: 16px;
  width: max-content;
  color: #fff;
  font: 500 24px/32px Inter, sans-serif;
}

/* Course page */
.page { flex: 1; min-height: 0; overflow: hidden; padding: 14px 14px 0; }
.masthead {
  display: flex;
  height: 104px;
  padding: 10px 12px 0 0;
  background: #033387;
}
.brand {
  display: flex;
  align-items: center;
  gap: 8px;
  width: 414px;
  height: 84px;
  padding: 0 0 2px 16px;
  border: 2px solid #4a6fb3;
  background: #1549ae;
  color: #fff;
  font-size: 44px;
  font-weight: 700;
}
.maa {
  display: flex;
  align-items: baseline;
  gap: 12px;
  height: 78px;
  margin-left: 74px;
  color: #fff;
  font-family: "Open Sans Condensed", "Liberation Sans Narrow", "DejaVu Sans Condensed", sans-serif;
  font-weight: 700;
}
.maa strong { font-size: 70px; line-height: 76px; }
.maa span { font-size: 26px; }
.login {
  display: flex;
  align-items: center;
  height: 52px;
  margin: 6px 0 0 auto;
  color: #fff;
  font-size: 24px;
}

.btn {
  display: inline-flex;
  align-items: center;
  justify-content: center;
  border: 2px solid #c4c4c4;
  border-bottom-color: #adadad;
  border-radius: 8px;
  background: linear-gradient(#fff, #e6e6e6);
  color: #000;
}
.btn.small { gap: 6px; height: 52px; padding: 0 20px; }
.btn.up { width: 70px; border-radius: 8px; box-shadow: 0 2px 4px #0001; }
.btn.primary {
  height: 60px;
  padding: 0 24px;
  border-color: #03256b;
  border-radius: 8px;
  background: linear-gradient(#033387, #000080);
  box-shadow: inset 0 2px 0 #ffffff33, 0 2px 4px #0001;
  color: #fff;
}

.columns { display: grid; grid-template-columns: 414px 1fr; column-gap: 74px; }
aside { padding-top: 28px; font-size: 26px; }
.panel {
  display: flex;
  flex-direction: column;
  border: 2px solid #e4e4e4;
  background: #f5f5f5;
}
.main-menu h2, .main-menu a { padding: 6px 30px; font-size: 26px; }
.main-menu h2 { color: #777; }
.main-menu .sub { display: flex; flex-direction: column; width: 350px; padding: 0 0 0 60px; }
.main-menu .sub a { padding: 6px 0; }
.main-menu .sub a.current { padding: 6px 30px; }
a.current { background: #033387; color: #fff; }
.problems { gap: 6px; margin-top: 15px; padding: 14px; border-radius: 16px 16px 0 0; }
.problems h2 {
  margin-bottom: 22px;
  border-radius: 16px;
  background: #033387;
  color: #fff;
  font-size: 31px;
  line-height: 60px;
  text-align: center;
}
.problems a { padding-left: 30px; line-height: 42px; }
.problems a i { font-family: "DejaVu Sans", sans-serif; font-weight: 700; -webkit-text-stroke: 1px; }
.progress {
  display: flex;
  height: 44px;
  margin: 0 30px 16px;
  border: 2px solid #b4b4b4;
  border-radius: 10px;
  background: #dcdcdc;
}
.progress i { border: 4px solid; border-radius: 10px; }
.progress .done { border-color: #38f80f; background: #91ff87; }
.progress .tried { border-color: #ffad22; background: #ffff16; }

.content { padding-top: 14px; }
.trail { display: flex; height: 76px; margin-right: 11px; }
.crumbs {
  flex: 1;
  display: flex;
  align-items: center;
  gap: 12px;
  padding-left: 30px;
  border: 2px solid #e4e4e4;
  border-radius: 8px;
  background: #f5f5f5;
}
.crumbs span { color: #777; }
h1 { margin: 78px 0 36px; font-size: 63px; line-height: 80px; }
.row { display: flex; gap: 8px; }
.problem {
  width: 83%;
  margin: 14px 0 40px;
  padding: 19px 17px 46px;
  border: 2px solid #e0e0e0;
  border-radius: 8px;
  background: #f5f5f5;
  box-shadow: inset 0 2px 4px #0001;
}
.problem p { margin-bottom: 28px; }
.problem input {
  display: block;
  width: 340px;
  height: 60px;
  margin-left: 8px;
  padding: 0 12px;
  border: 2px solid #ccc;
  border-radius: 8px;
  background: #fff;
  box-shadow: inset 0 2px 4px #0001;
  color: #555;
  font: inherit;
}
.row.submit { gap: 16px; padding-left: 6px; }
.attempts { margin: 28px 0 68px; }

/* Shade that the dock casts on the bottom of the window */
.dock-shade {
  position: absolute;
  inset: auto 0 0;
  height: 110px;
  pointer-events: none;
  background: linear-gradient(#0000, #0000001f);
  -webkit-mask-image: linear-gradient(90deg, transparent 1%, #000 10%, #000 93%, transparent 98%);
  mask-image: linear-gradient(90deg, transparent 1%, #000 10%, #000 93%, transparent 98%);
}

/* Dock */
.desktop {
  flex: none;
  position: relative;
  display: flex;
  justify-content: center;
  height: 118px;
  padding-top: 2px;
  background: linear-gradient(90deg, #1b2a30, #182023 30%, #1c2a2e 60%, #182023 90%, #1d2528);
}
.dock {
  display: flex;
  height: 106px;
  padding: 14px 3px 0;
  border: 2px solid #454d50;
  border-radius: 30px;
  background: linear-gradient(90deg, #222c31, #263238 50%, #22292c 70%, #242d31);
}
.app { position: relative; width: 88px; height: 68px; padding: 0 10px; }
.app > svg { width: 68px; height: 68px; }
.app.big { padding: 0 7px; }
.app.big > svg { width: 74px; height: 74px; margin-top: -4px; }
.app.running::after {
  content: "";
  position: absolute;
  left: 40px;
  top: 78px;
  width: 8px;
  height: 8px;
  border-radius: 50%;
  background: #a5acb0;
}
.rule { width: 2px; height: 78px; margin: -2px 19px; background: #565e62; }
.cal-month { fill: #fff; font: 700 13px Inter, sans-serif; text-anchor: middle; }
.cal-day { fill: #222; font: 400 42px Inter, sans-serif; text-anchor: middle; }
.dict { fill: #f3eeee; font: 400 32px "Liberation Serif", serif; text-anchor: middle; }
.mixed { fill: #fff; font: 700 6px Inter, sans-serif; }
.scribble { position: absolute; right: 0; top: 4px; }
```
